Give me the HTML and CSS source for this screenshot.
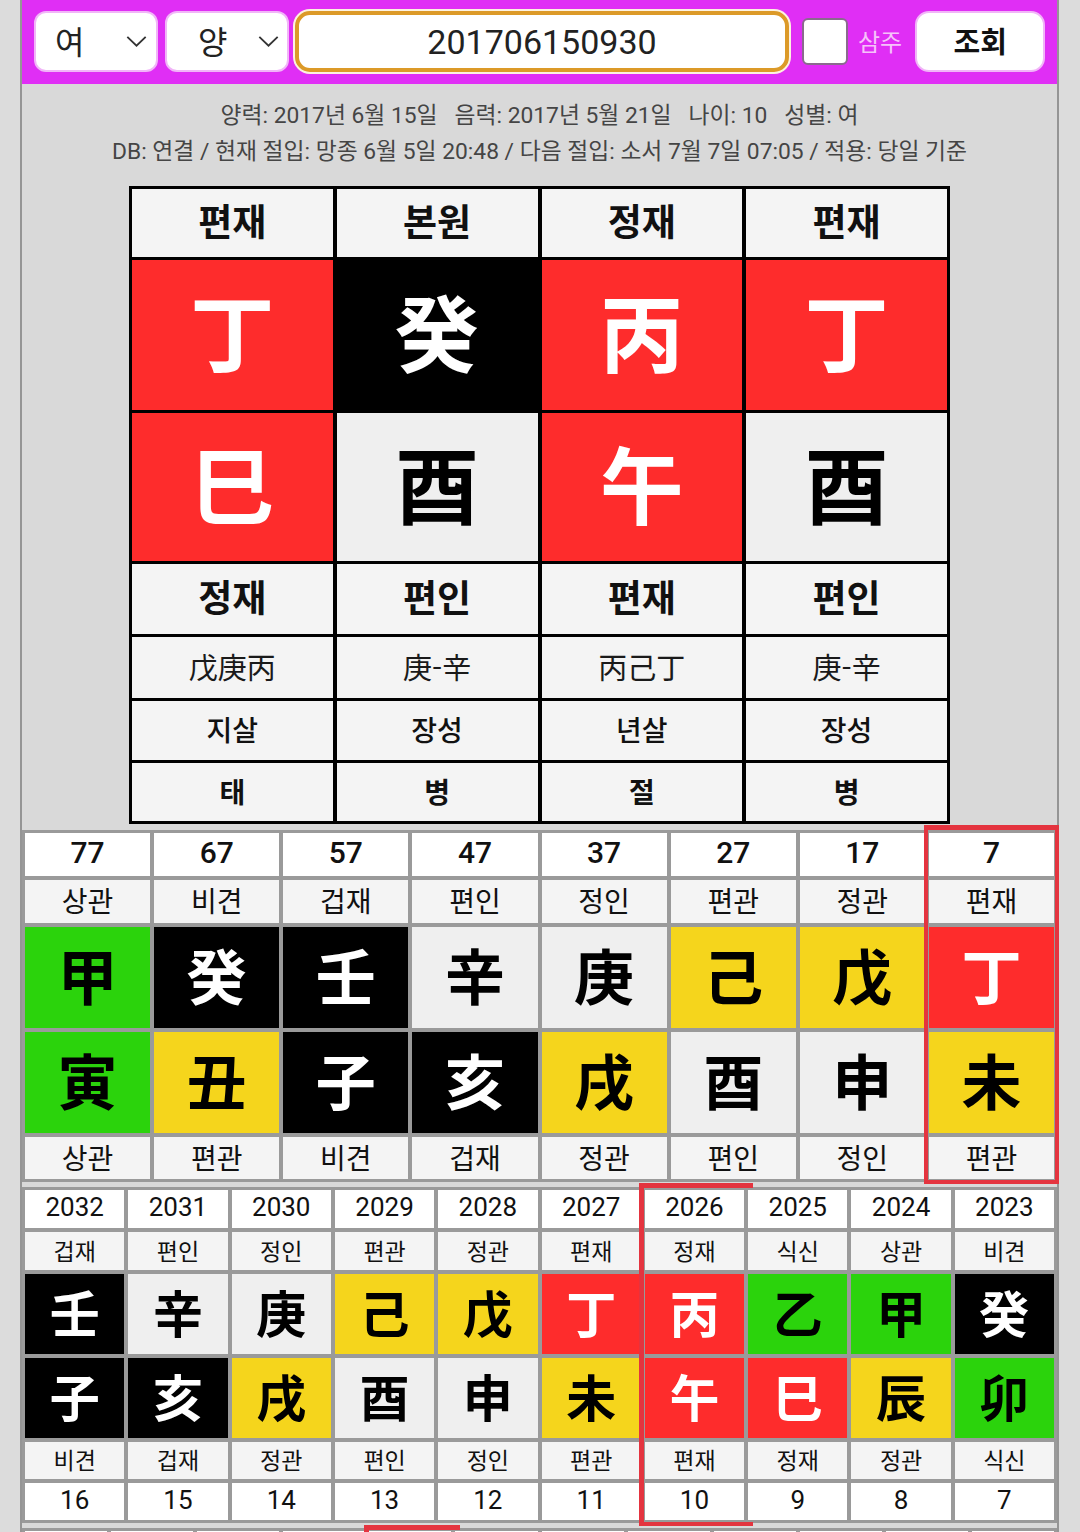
FILE: index.html
```html
<!DOCTYPE html>
<html lang="ko">
<head>
<meta charset="utf-8">
<title>사주 조회</title>
<link rel="stylesheet" href="styles.css">
</head>
<body>
<div class="app">
  <header class="toolbar">
    <div class="select select--gender"><span>여</span><svg class="chev" viewBox="0 0 22 12"><polyline points="1,1 11,10.5 21,1" fill="none" stroke="#333" stroke-width="2"/></svg></div>
    <div class="select select--cal"><span>양</span><svg class="chev" viewBox="0 0 22 12"><polyline points="1,1 11,10.5 21,1" fill="none" stroke="#333" stroke-width="2"/></svg></div>
    <div class="date-input">201706150930</div>
    <span class="check"></span>
    <span class="check-label">삼주</span>
    <div class="btn">조회</div>
  </header>

  <section class="info">
    <p class="info-line"><span>양력: 2017년 6월 15일</span><span>음력: 2017년 5월 21일</span><span>나이: 10</span><span>성별: 여</span></p>
    <p class="info-line">DB: 연결 / 현재 절입: 망종 6월 5일 20:48 / 다음 절입: 소서 7월 7일 07:05 / 적용: 당일 기준</p>
  </section>

  <div class="pillars">
    <div class="pc head">편재</div><div class="pc head">본원</div><div class="pc head">정재</div><div class="pc head">편재</div>
    <div class="pc big fire">丁</div><div class="pc big water">癸</div><div class="pc big fire">丙</div><div class="pc big fire">丁</div>
    <div class="pc big fire">巳</div><div class="pc big metal">酉</div><div class="pc big fire">午</div><div class="pc big metal">酉</div>
    <div class="pc head">정재</div><div class="pc head">편인</div><div class="pc head">편재</div><div class="pc head">편인</div>
    <div class="pc hidden">戊庚丙</div><div class="pc hidden">庚-辛</div><div class="pc hidden">丙己丁</div><div class="pc hidden">庚-辛</div>
    <div class="pc sal">지살</div><div class="pc sal">장성</div><div class="pc sal">년살</div><div class="pc sal">장성</div>
    <div class="pc stage">태</div><div class="pc stage">병</div><div class="pc stage">절</div><div class="pc stage">병</div>
  </div>

  <div class="luck dae">
    <div class="c num">77</div><div class="c num">67</div><div class="c num">57</div><div class="c num">47</div><div class="c num">37</div><div class="c num">27</div><div class="c num">17</div><div class="c num">7</div>
    <div class="c lbl">상관</div><div class="c lbl">비견</div><div class="c lbl">겁재</div><div class="c lbl">편인</div><div class="c lbl">정인</div><div class="c lbl">편관</div><div class="c lbl">정관</div><div class="c lbl">편재</div>
    <div class="c hj wood">甲</div><div class="c hj water">癸</div><div class="c hj water">壬</div><div class="c hj metal">辛</div><div class="c hj metal">庚</div><div class="c hj earth">己</div><div class="c hj earth">戊</div><div class="c hj fire">丁</div>
    <div class="c hj wood">寅</div><div class="c hj earth">丑</div><div class="c hj water">子</div><div class="c hj water">亥</div><div class="c hj earth">戌</div><div class="c hj metal">酉</div><div class="c hj metal">申</div><div class="c hj earth">未</div>
    <div class="c lbl">상관</div><div class="c lbl">편관</div><div class="c lbl">비견</div><div class="c lbl">겁재</div><div class="c lbl">정관</div><div class="c lbl">편인</div><div class="c lbl">정인</div><div class="c lbl">편관</div>
    <div class="hl hl--dae"></div>
  </div>

  <div class="luck se">
    <div class="c num">2032</div><div class="c num">2031</div><div class="c num">2030</div><div class="c num">2029</div><div class="c num">2028</div><div class="c num">2027</div><div class="c num">2026</div><div class="c num">2025</div><div class="c num">2024</div><div class="c num">2023</div>
    <div class="c lbl">겁재</div><div class="c lbl">편인</div><div class="c lbl">정인</div><div class="c lbl">편관</div><div class="c lbl">정관</div><div class="c lbl">편재</div><div class="c lbl">정재</div><div class="c lbl">식신</div><div class="c lbl">상관</div><div class="c lbl">비견</div>
    <div class="c hj water">壬</div><div class="c hj metal">辛</div><div class="c hj metal">庚</div><div class="c hj earth">己</div><div class="c hj earth">戊</div><div class="c hj fire">丁</div><div class="c hj fire">丙</div><div class="c hj wood">乙</div><div class="c hj wood">甲</div><div class="c hj water">癸</div>
    <div class="c hj water">子</div><div class="c hj water">亥</div><div class="c hj earth">戌</div><div class="c hj metal">酉</div><div class="c hj metal">申</div><div class="c hj earth">未</div><div class="c hj fire">午</div><div class="c hj fire">巳</div><div class="c hj earth">辰</div><div class="c hj wood">卯</div>
    <div class="c lbl">비견</div><div class="c lbl">겁재</div><div class="c lbl">정관</div><div class="c lbl">편인</div><div class="c lbl">정인</div><div class="c lbl">편관</div><div class="c lbl">편재</div><div class="c lbl">정재</div><div class="c lbl">정관</div><div class="c lbl">식신</div>
    <div class="c num">16</div><div class="c num">15</div><div class="c num">14</div><div class="c num">13</div><div class="c num">12</div><div class="c num">11</div><div class="c num">10</div><div class="c num">9</div><div class="c num">8</div><div class="c num">7</div>
    <div class="hl hl--se"></div>
  </div>

  <div class="luck mon">
    <div class="c num"></div><div class="c num"></div><div class="c num"></div><div class="c num"></div><div class="c num"></div><div class="c num"></div><div class="c num"></div><div class="c num"></div><div class="c num"></div><div class="c num"></div><div class="c num"></div><div class="c num"></div>
    <div class="hl hl--mon"></div>
  </div>
</div>
</body>
</html>
```

FILE: styles.css
```css
* { box-sizing: border-box; }
html, body { margin: 0; padding: 0; }
body {
  background: #dcdcdc;
  font-family: Roboto, "Noto Sans CJK KR", sans-serif;
  color: #111;
  overflow: hidden;
}
.app {
  margin: 0 21px 0 20px;
  border-left: 2px solid #959595;
  border-right: 2px solid #959595;
  background: #d9d9d9;
  min-height: 1700px;
}

/* toolbar */
.toolbar {
  height: 84px;
  background: #e02ef5;
  display: flex;
  align-items: center;
  padding: 0 10px 1px 12px;
}
.select {
  height: 61px;
  width: 124px;
  background: #fff;
  border: 2px solid #f1b5f8;
  border-radius: 12px;
  display: flex;
  align-items: center;
  justify-content: space-between;
  font-family: "Noto Sans CJK KR", sans-serif;
  font-size: 32px;
  color: #222;
}
.select span { padding-bottom: 4px; }
.select--gender { padding: 0 9px 0 19px; }
.select--cal { margin-left: 7px; padding: 0 8px 0 31px; }
.chev { width: 21px; height: 11px; }
.date-input {
  margin-left: 6px;
  width: 494px;
  height: 61px;
  border: 4px solid #dc9a28;
  border-radius: 15px;
  box-shadow: 0 0 0 2px #fdf1e0;
  background: #fff;
  display: flex;
  align-items: center;
  justify-content: center;
  font-size: 34px;
  color: #222;
}
.check {
  margin-left: 13px;
  width: 46px;
  height: 47px;
  border: 2px solid #8a6a8e;
  border-radius: 6px;
  background: #fff;
}
.check-label {
  margin-left: 10px;
  padding-bottom: 3px;
  font-family: "Noto Sans CJK KR", sans-serif;
  font-size: 24px;
  color: #f6c3fa;
}
.btn {
  margin-left: 13px;
  width: 130px;
  height: 61px;
  border-radius: 14px;
  background: #fff;
  border: 2px solid #f1b5f8;
  display: flex;
  align-items: center;
  justify-content: center;
  padding-bottom: 4px;
  font-family: "Noto Sans CJK KR", sans-serif;
  font-weight: 700;
  font-size: 29px;
  color: #111;
}

/* info */
.info {
  padding: 14px 0 16px;
  font-size: 22.8px;
  line-height: 36px;
  color: #454545;
}
.info-line {
  margin: 0;
  display: flex;
  justify-content: center;
  gap: 17px;
}

/* main pillars */
.pillars {
  width: 821px;
  margin: 0 auto;
  display: grid;
  grid-template-columns: repeat(4, 1fr);
  grid-template-rows: 68px 150px 148px 70px 61px 59px 58px;
  column-gap: 4px;
  row-gap: 3px;
  padding: 3px;
  background: #000;
}
.pc {
  display: flex;
  align-items: center;
  justify-content: center;
  background: #f4f4f4;
  font-family: "Noto Sans CJK KR", sans-serif;
  color: #111;
}
.pc.head { font-size: 37px; font-weight: 700; padding-bottom: 6px; }
.pc.big { font-size: 84px; font-weight: 700; padding-bottom: 12px; }
.pc.hidden { font-size: 29px; font-weight: 400; color: #1a1a1a; padding-bottom: 3px; }
.pc.sal { font-size: 28px; font-weight: 500; padding-bottom: 3px; }
.pc.stage { font-size: 28px; font-weight: 700; padding-bottom: 3px; }

/* five-element colours */
.fire { background: #fe2c2c !important; color: #fff !important; }
.water { background: #000 !important; color: #fff !important; }
.wood { background: #2bd30c !important; color: #000 !important; }
.earth { background: #f5d51c !important; color: #000 !important; }
.metal { background: #efefef !important; color: #000 !important; }

/* luck tables */
.luck {
  position: relative;
  display: grid;
  gap: 4px;
  padding: 3px;
  background: #9a9a9a;
}
.dae {
  margin-top: 6px;
  grid-template-columns: repeat(8, 1fr);
  grid-template-rows: 43px 43px 101px 101px 42px;
}
.se {
  margin-top: 5px;
  grid-template-columns: repeat(10, 1fr);
  grid-template-rows: 38px 38px 80px 80px 37px 37px;
}
.mon {
  margin-top: 5px;
  grid-template-columns: repeat(12, 1fr);
  grid-template-rows: 40px;
}
.c {
  display: flex;
  align-items: center;
  justify-content: center;
  background: #f4f4f4;
  color: #111;
}
.c.num { background: #fff; padding-bottom: 4px; }
.dae .num { font-size: 30px; font-weight: 500; }
.dae .lbl { font-family: "Noto Sans CJK KR", sans-serif; font-size: 28px; padding-bottom: 3px; }
.dae .hj { font-family: "Noto Sans CJK KR", sans-serif; font-size: 60px; font-weight: 700; padding-bottom: 8px; }
.se .num { font-size: 26px; }
.se .lbl { font-family: "Noto Sans CJK KR", sans-serif; font-size: 23px; padding-bottom: 3px; }
.se .hj { font-family: "Noto Sans CJK KR", sans-serif; font-size: 50px; font-weight: 700; padding-bottom: 6px; }

/* current-period highlight (overlay on the grid area of one column) */
.hl {
  position: absolute;
  grid-row: 1 / -1;
  border-style: solid;
  border-color: #e4343f;
  z-index: 2;
  pointer-events: none;
}
.hl--dae {
  grid-column: 8 / 9;
  top: -8px; bottom: -5px; left: -5px; right: -5px;
  border-width: 5px 4px 4px 4px;
}
.hl--se {
  grid-column: 7 / 8;
  top: -7px; bottom: -6px; left: -6px; right: -9px;
  border-width: 5px 0 4px 5px;
}
.hl--mon {
  grid-column: 5 / 6;
  top: -6px; bottom: -6px; left: -5px; right: -9px;
  border-width: 5px 0 4px 5px;
}
```
